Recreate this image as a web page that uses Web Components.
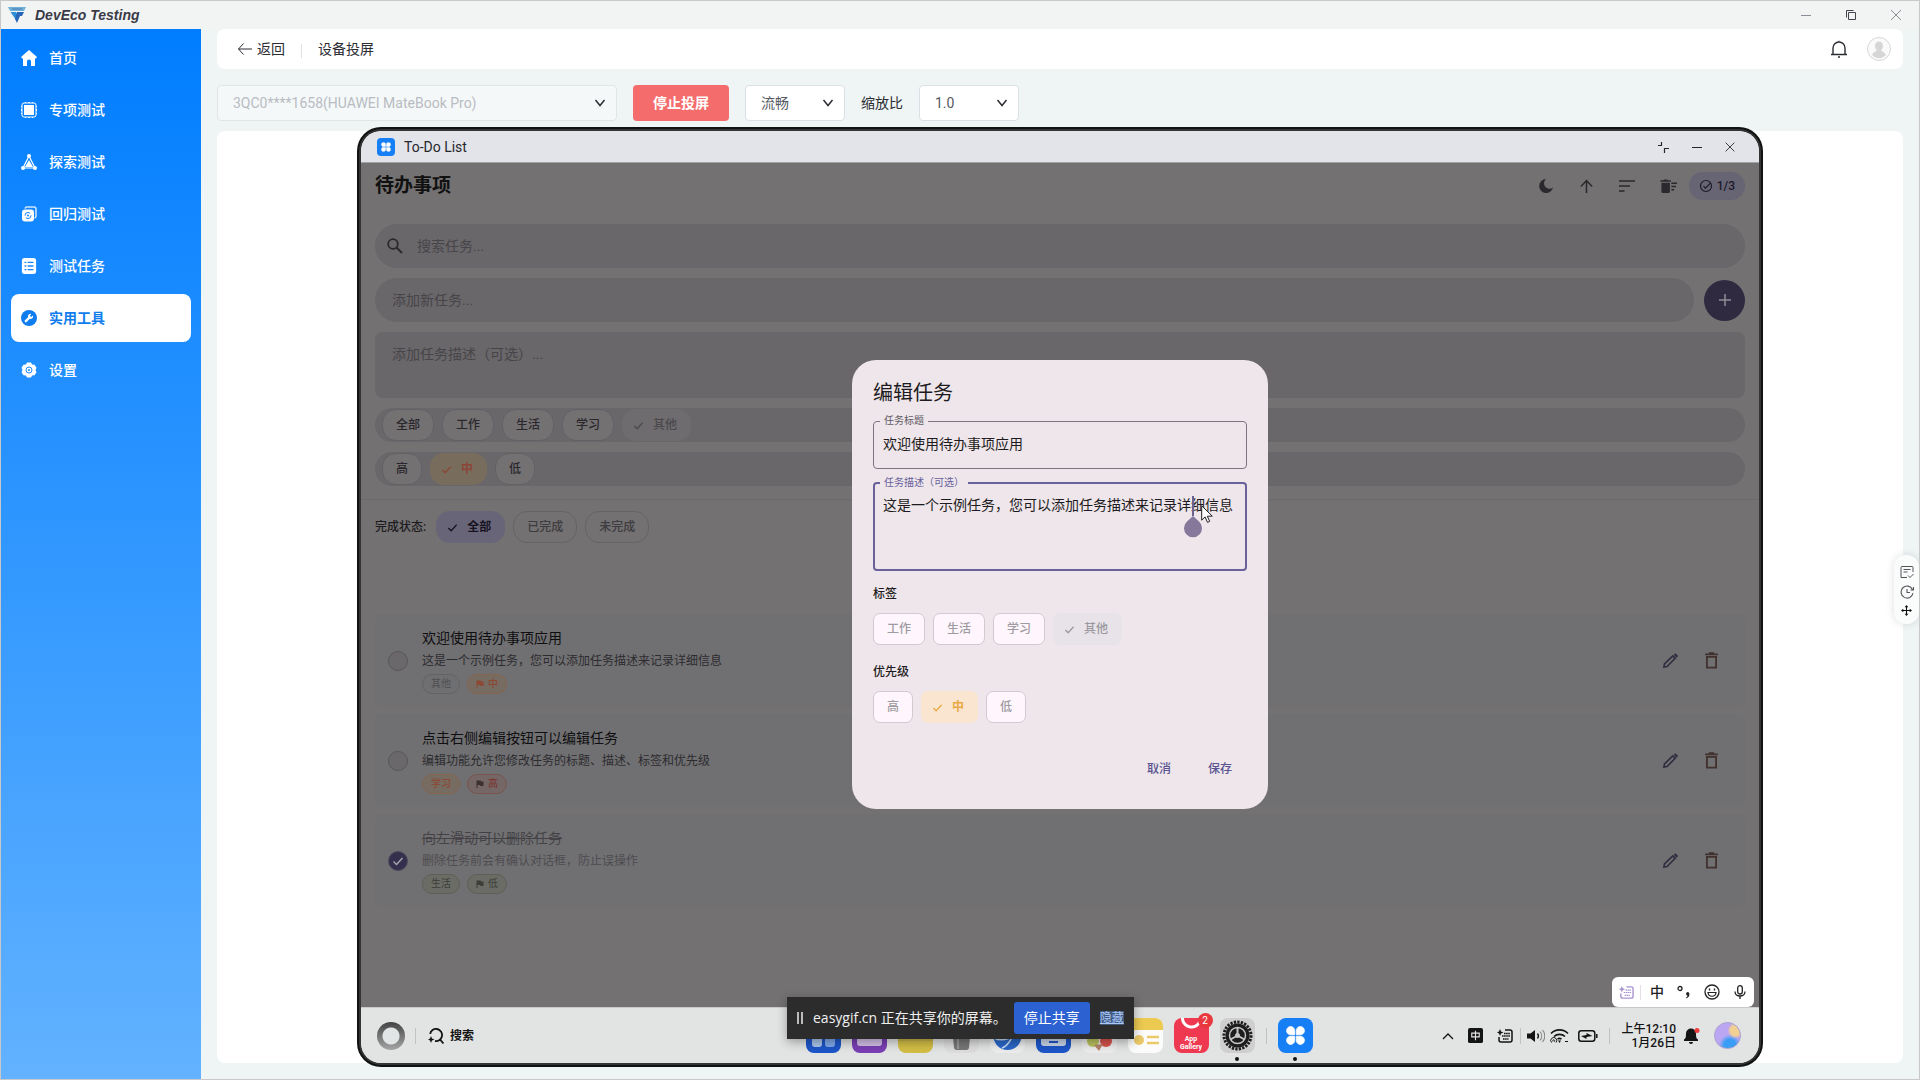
<!DOCTYPE html>
<html lang="zh-CN">
<head>
<meta charset="utf-8">
<title>DevEco Testing</title>
<style>
  * { box-sizing: border-box; }
  body {
    margin: 0;
    height: 100vh;
    font: 14px/20px Roboto, "Noto Sans CJK SC", sans-serif;
    color: #2b2d33;
  }
</style>
</head>
<body>
<dev-window></dev-window>

<script>
// Icons.js
const ICONS = {
  logo: ['0 0 18 16', `<path d="M0 0h18l-2 4H2z" fill="#6fb0d8" stroke="none"/><path d="M2.500 5H8l2 4-2 4z" fill="#2f8fd6" stroke="none"/><path d="M9 5h7l-2 4h-2l-3 7-2-4z" fill="#2766b8" stroke="none"/><path d="M4 2h10" stroke="#4a7fb0"/>`],
  min: ['0 0 16 16', `<path d="M3 8.500h10"/>`],
  restore: ['0 0 16 16', `<path d="M5.500 5.500h7v7h-7zM3.500 10.500v-7h7" />`],
  close: ['0 0 16 16', `<path d="M3 3l10 10M13 3L3 13"/>`],
  collapse: ['0 0 16 16', `<path d="M3 6.500h3.500V3M9.500 14v-4.500H14" stroke-width="1.200"/>`],
  home: ['0 0 16 16', `<path d="M8 0l8 7-1 1.500h-1V16h-4v-4.500a2 2 0 0 0-4 0V16H2V8.500H1L0 7z" class="f"/>`],
  chip: ['0 0 16 16', `<rect x="1" y="1" width="14" height="14" rx="2"/><rect x="3" y="3" width="10" height="10" class="f"/><path d="M4 .5h1M7 .5h2M11 .5h1M4 15.500h1M7 15.500h2M11 15.500h1M.5 4v1M.5 7v2M.5 11v1M15.500 4v1M15.500 7v2M15.500 11v1"/>`],
  explore: ['0 0 16 16', `<path d="M8 2L2 14h12z" stroke-width="1.200"/><path d="M8 6l4 7H4z" class="f"/><circle cx="8" cy="2" r="2" class="f"/><circle cx="2" cy="14" r="2" class="f"/><circle cx="14" cy="14" r="2" class="f"/>`],
  regress: ['0 0 16 16', `<path d="M4 2.500a2 2 0 0 1 2-1.500h7a2 2 0 0 1 2 2v7a2 2 0 0 1-1.500 2" stroke-width="1.500" opacity=".8"/><rect x="1" y="3.500" width="12" height="12" rx="3" class="f"/><circle cx="7" cy="9.500" r="3" stroke="#1483ff" stroke-dasharray="7 2"/><circle cx="7" cy="9.500" r="1" fill="#1483ff" stroke="none"/>`],
  tasks: ['0 0 16 18', `<rect width="16" height="18" rx="3" class="f"/><path d="M3 5h2M6.500 5H13M3 9h2M6.500 9H13M3 13h2M6.500 13H13" stroke="#1686ff" stroke-width="1.500"/>`],
  wrench: ['0 0 16 16', `<circle cx="8" cy="8" r="8" class="f"/><path d="M4.800 11.200L8.500 7.500" stroke="#fff" stroke-width="2.400" stroke-linecap="round"/><path d="M12 5.500a2.600 2.600 0 1 1-1.700-1.600L8.900 5.700l1.300 1.300z" fill="#fff" stroke="none"/>`],
  gear: ['0 0 16 16', `<path d="M6 .5h4l1 2 2.500 .3 2 3-1 2.200 1 2.200-2 3-2.500.3-1 2H6l-1-2-2.500-.3-2-3 1-2.200-1-2.200 2-3L5 2.500z" class="f"/><circle cx="8" cy="8" r="3" stroke="#1f8aff"/><circle cx="8" cy="8" r="1" fill="#1f8aff" stroke="none"/>`],
  back: ['0 0 16 16', `<path d="M15 8H1.500M6.500 2.500L1.500 8l5 5.500"/>`],
  bell: ['0 0 18 18', `<path d="M1 14.500h16M3 14.500V8a6 6 0 0 1 12 0v6.500M8 17h2M8.500 1.500h1" stroke-width="1.400"/>`],
  user: ['0 0 24 24', `<circle cx="12" cy="12" r="11.500" fill="#fafafa" stroke="#d6d6d6"/><path d="M12 4.500a4 4.500 0 0 1 4 4.500c0 2-.8 3.200-1.800 4 .3 1.500 3 1.700 4.800 4.800a9 9 0 0 1-14 0c1.800-3.100 4.500-3.300 4.800-4.800C8.800 12.200 8 11 8 9a4 4.500 0 0 1 4-4.500z" fill="#d6d6d6" stroke="none"/>`],
  chevron: ['0 0 12 12', `<path d="M1.500 3l4.500 5.500L10.500 3" stroke-width="1.500"/>`],
  up: ['0 0 12 12', `<path d="M1 9l5-5 5 5" stroke-width="1.300"/>`],
  clover: ['0 0 18 18', `<rect width="18" height="18" rx="4" fill="#167ff5" stroke="none"/><path d="M8.600 8.600H6.800a2.100 2.100 0 1 1 1.800-1.900zM9.400 8.600h1.800a2.100 2.100 0 1 0-1.800-1.900zM8.600 9.400H6.800a2.100 2.100 0 1 0 1.800 1.900zM9.400 9.400h1.800a2.100 2.100 0 1 1-1.800 1.900z" fill="#fff" stroke="#fff" stroke-width=".4"/>`],
  moon: ['0 0 16 16', `<path d="M8 1a7 7 0 1 0 7 8.500A5 5 0 0 1 8 1z" class="f"/>`],
  arrowUp: ['0 0 16 16', `<path d="M8 15V2M2 8l6-6.300L14 8" stroke-width="1.600"/>`],
  sort: ['0 0 16 16', `<path d="M0 3h16M0 8h11M0 13h5.500" stroke-width="1.700"/>`],
  sweep: ['0 0 18 16', `<path d="M1.500 4h9v9.500a1.500 1.500 0 0 1-1.500 1.500H3a1.500 1.500 0 0 1-1.500-1.500zM.5 1.500h3L4.500.5h3l1 1h3V3H.5z" class="f"/><path d="M12 4.500h6M12 8h5M12 11.500h3" stroke-width="1.600"/>`],
  checkCircle: ['0 0 14 14', `<circle cx="7" cy="7" r="5.500" stroke-width="1.200"/><path d="M4.500 7.200l1.900 1.900 5-5" stroke-width="1.200"/>`],
  search: ['0 0 16 16', `<circle cx="6" cy="6" r="4.800" stroke-width="1.800"/><path d="M9.500 9.500l5.500 5.500" stroke-width="2"/>`],
  plus: ['0 0 14 14', `<path d="M7 1v12M1 7h12" stroke-width="1.500"/>`],
  check: ['0 0 12 12', `<path d="M1.500 6.500l3 3 6-6.500" stroke-width="1.400"/>`],
  flag: ['0 0 8 8', `<path d="M.5.500h4l.5 1h2.500v4.500H4.500L4 5H1.500v3h-1z" class="f"/>`],
  pencil: ['0 0 18 18', `<path d="M2 16l.6-3.300 8.800-8.600 2.600 2.600-8.700 8.700z" stroke-width="1.700"/><path d="M12.500 3l1.600-1.600 3 2.800L15.300 6z" class="f"/>`],
  trash: ['0 0 14 16', `<path d="M1 2.200h12M4.500 1h5" stroke-width="1.600"/><path d="M2.700 4.500h8.600v10.200H2.700z" stroke-width="1.700"/>`],
  aiSearch: ['0 0 16 16', `<path d="M2.200 6A6 6 0 1 1 7 13M12 11.500l3.500 4" stroke-width="1.800"/><path d="M3 8l1 2.500L6.500 11.500 4 12.500 3 15l-1-2.500L0 11.500l2-1z" class="f"/>`],
  zhong: ['0 0 16 16', `<rect width="16" height="16" rx="2" class="f"/><path d="M4 5.500h8v4H4zM8 3v10" stroke="#e4e4e4" stroke-width="1.200"/>`],
  keyboard: ['0 0 16 14', `<path d="M8 1h5a2 2 0 0 1 2 2v8a2 2 0 0 1-2 2H4a2 2 0 0 1-2-2V8" stroke-width="1.500"/><path d="M3 0l1 2.500L6.500 3.500 4 4.500 3 7 2 4.500 0 3.500 2 2.500z" class="f"/><path d="M5 7h8M7 4.500h6M6 10h5.500" stroke-width="1.300" stroke-dasharray="1.600 .5"/>`],
  speaker: ['0 0 18 14', `<path d="M0 4.500h3.500L8 1v12L3.500 9.500H0z" class="f" stroke-linejoin="round"/><path d="M10.500 4.500a4 4 0 0 1 0 5" stroke-width="1.300"/><path d="M13 2.500a7 7 0 0 1 0 9M15.500 1a9 9 0 0 1 0 12" stroke-width="1.100" opacity=".45"/>`],
  wifi: ['0 0 20 16', `<path d="M1 5.500a12 12 0 0 1 17 0M4 8.500a8 8 0 0 1 11 0M7.500 11a4 4 0 0 1 4 0" stroke-width="1.700"/><path d="M8 12.500h3L9.500 15z" class="f"/><path d="M1.500 14.500a3 3 0 1 1 4.500 0M3 13.500a1 1 0 1 1 1.500 0M15 13.500h3" stroke-width="1"/>`],
  battery: ['0 0 20 12', `<rect x=".8" y=".8" width="16" height="10.400" rx="2.500" stroke-width="1.500"/><path d="M18.800 4v4" stroke-width="1.500"/><path d="M3 6l5.500-1V3L14.500 6l-6 1v2z" class="f"/>`],
  bellSolid: ['0 0 16 16', `<path d="M7 .5a5 5 0 0 1 5 5c0 4 .5 5 2 6v1.500H0V11.500c1.500-1 2-2 2-6a5 5 0 0 1 5-5zM5 14h4a2 2 0 0 1-4 0z" class="f"/><circle cx="13" cy="2.500" r="2.500" fill="#ee3b3b" stroke="none"/>`],
  punct: ['0 0 14 14', `<circle cx="3" cy="3.500" r="2" stroke-width="1.300"/><path d="M10.500 7a1.900 1.900 0 0 1 1.900 2c0 2.200-.8 3.500-2.900 4.200l-.4-.9c1-.5 1.400-1 1.400-1.600A1.900 1.900 0 0 1 10.500 7z" class="f"/>`],
  smile: ['0 0 16 16', `<circle cx="8" cy="8" r="7" stroke-width="1.300"/><path d="M4 8.500c.5 5 7.500 5 8 0z" stroke-width="1.200"/><path d="M5.500 4.500v2M10.500 4.500v2" stroke-width="1.400"/>`],
  mic: ['0 0 12 14', `<rect x="3.700" y=".7" width="4.600" height="8.300" rx="2.300" stroke-width="1.300"/><path d="M1 6.500c0 6 10 6 10 0M6 11v3" stroke-width="1.300"/>`],
  note: ['0 0 14 14', `<path d="M13 7V2.500a1 1 0 0 0-1-1H2a1 1 0 0 0-1 1v10h6M3.500 4.500h7M3.500 7h4M8 10.500l2 2 3.500-3.500"/>`],
  history: ['0 0 14 14', `<path d="M12.500 4.500A6 6 0 1 0 13 8M13.500 2v3h-3M7 4v3.500h3" stroke-width="1.100"/>`],
  move: ['0 0 12 12', `<path d="M6 1v10M1 6h10" stroke-width="1.200"/><path d="M6 0l2 2.500H4zM6 12L4 9.500h4zM0 6l2.500-2v4zM12 6L9.500 8V4z" class="f"/>`],
  cursor: ['0 0 12 18', `<path d="M.7.700v14.500l3.400-3.300 2.400 5.500 2.200-1-2.400-5.200h5z" fill="#fff" stroke="#222"/>`],
  drop: ['0 0 20 22', `<path d="M10 0l6 5.500a9 9 0 1 1-12 0z" class="f"/>`],
  // dock artwork
  dockHome: ['0 0 35 35', `<rect width="35" height="35" rx="8" fill="#1d56c8" stroke="none"/><g fill="#a9c4ea" stroke="none"><rect x="6" y="6" width="10" height="10" rx="3"/><rect x="19" y="6" width="10" height="10" rx="3"/><rect x="6" y="18" width="10" height="11" rx="3"/><rect x="19" y="18" width="10" height="11" rx="3" fill="#7fa8e8"/></g>`],
  dockPurple: ['0 0 35 35', `<rect width="35" height="35" rx="8" fill="#7a3fb4" stroke="none"/><rect x="5" y="6" width="25" height="22" rx="3" fill="#d3bfe6" stroke="none"/>`],
  dockFiles: ['0 0 35 35', `<rect width="35" height="35" rx="8" fill="#d2bd45" stroke="none"/><path d="M0 22h35" stroke="#b9a848"/>`],
  dockBin: ['0 0 35 35', `<rect width="35" height="35" rx="8" fill="#dcdcdc" stroke="none"/><path d="M8 8h19l-2 22a3 3 0 0 1-2 2H12a3 3 0 0 1-2-2z" fill="#777" stroke="none"/><path d="M14 10v21" stroke="#999" stroke-width="2"/>`],
  dockWeb: ['0 0 35 35', `<rect width="35" height="35" rx="8" fill="#ececec" stroke="none"/><circle cx="17.500" cy="18" r="14" fill="#2a67c8" stroke="none"/><path d="M4 20c8 4 20 1 26-8M12 30c6-2 12-12 13-20" stroke="#c6dcf5" stroke-width="1.500"/>`],
  dockMail: ['0 0 35 35', `<rect width="35" height="35" rx="8" fill="#1d56c8" stroke="none"/><rect x="5" y="7" width="25" height="21" rx="3" fill="#c9d6ea" stroke="none"/><path d="M13 24h9" stroke="#1d56c8" stroke-width="2"/>`],
  dockPhoto: ['0 0 35 35', `<rect width="35" height="35" rx="8" fill="#ebebeb" stroke="none"/><g stroke="none"><circle cx="11" cy="23" r="6" fill="#b9c25e"/><circle cx="24" cy="23" r="6" fill="#d8524c"/><circle cx="18" cy="14" r="7" fill="#e8a23c"/><path d="M12 27l5 6 4-7z" fill="#b5846a"/></g>`],
  dockCard: ['0 0 35 35', `<rect width="35" height="35" rx="8" fill="#fbfbfb" stroke="none"/><path d="M0 12V8a8 8 0 0 1 8-8h19a8 8 0 0 1 8 8v4z" fill="#ecca52" stroke="none"/><circle cx="11" cy="22" r="5" fill="#ecca6a" stroke="none"/><path d="M19 19h12M19 25h12" stroke="#ecca6a" stroke-width="2.500"/>`],
  dockGear: ['0 0 35 35', `<rect width="35" height="35" rx="8" fill="#cfcfcf" stroke="none"/><circle cx="17.500" cy="17.500" r="13.500" stroke="#1d1d1d" stroke-width="3" stroke-dasharray="2.300 1.200"/><circle cx="17.500" cy="17.500" r="12" fill="#1d1d1d" stroke="none"/><circle cx="17.500" cy="17.500" r="8" stroke="#c6c6c6" stroke-width="1.500"/><path d="M17.500 17.500V10M17.500 17.500l-7 4M17.500 17.500l7 4" stroke="#c6c6c6" stroke-width="2"/><circle cx="17.500" cy="17.500" r="2.500" fill="#c6c6c6" stroke="none"/>`]
};

class UiIcon extends HTMLElement {
  connectedCallback() {
    if (this.shadowRoot) return;
    const [box, body] = ICONS[this.getAttribute('name')];
    const size = this.getAttribute('size') || 16;
    this.attachShadow({ mode: 'open' }).innerHTML = `
      <style>
        :host { display: inline-flex; flex: none; justify-content: center; align-items: center; }
        svg { display: block; fill: none; stroke: currentColor; }
        .f { fill: currentColor; stroke: none; }
      </style>
      <svg width="${size}" height="${size}" viewBox="${box}" aria-hidden="true">${body}</svg>`;
  }
}
customElements.define('ui-icon', UiIcon);

// small helper: every element below is a static template plus its own styles
function define(name, html, setup) {
  const template = document.createElement('template');
  template.innerHTML = `<style>*, :host { box-sizing: border-box; } button, input, select, textarea { font: inherit; color: inherit; margin: 0; }</style>` + html;
  customElements.define(name, class extends HTMLElement {
    connectedCallback() {
      if (this.shadowRoot) return;
      this.attachShadow({ mode: 'open' }).appendChild(template.content.cloneNode(true));
      if (setup) setup(this, this.shadowRoot);
    }
  });
}

// Sidebar
define('nav-item', `
  <style>
    :host { display: block; }
    a {
      display: flex; align-items: center; gap: 12px;
      height: 48px; padding: 0 10px;
      border-radius: 8px; color: #fff; text-decoration: none; font-weight: 500;
    }
    :host([active]) a { background: #fff; color: #0f7dee; font-weight: 700; }
  </style>
  <a href="#"><slot></slot></a>
`, (el, root) => {
  root.querySelector('a').insertAdjacentHTML('afterbegin', `<ui-icon name="${el.getAttribute('icon')}"></ui-icon>`);
});

define('side-nav', `
  <style>
    :host { display: block; width: 200px; padding: 5px 10px; background: linear-gradient(#007dff, #62b2ff); }
    nav { display: flex; flex-direction: column; gap: 4px; }
  </style>
  <nav>
    <nav-item icon="home">首页</nav-item>
    <nav-item icon="chip">专项测试</nav-item>
    <nav-item icon="explore">探索测试</nav-item>
    <nav-item icon="regress">回归测试</nav-item>
    <nav-item icon="tasks">测试任务</nav-item>
    <nav-item icon="wrench" active>实用工具</nav-item>
    <nav-item icon="gear">设置</nav-item>
  </nav>
`);

// Window title bar
define('title-bar', `
  <style>
    :host { display: flex; align-items: center; height: 28px; padding: 0 15px 0 7px; background: #f2f4f4; color: #3a3a48; }
    h1 { margin: 0 auto 0 9px; font: italic bold 14px/20px "Liberation Sans", sans-serif; }
    button { display: flex; padding: 0; border: 0; background: none; color: #8d8d97; }
    .btns { display: flex; gap: 29px; }
    .r { color: #44444c; }
  </style>
  <ui-icon name="logo" size="18"></ui-icon>
  <h1>DevEco Testing</h1>
  <div class="btns">
    <button aria-label="最小化"><ui-icon name="min"></ui-icon></button>
    <button class="r" aria-label="还原"><ui-icon name="restore"></ui-icon></button>
    <button aria-label="关闭"><ui-icon name="close"></ui-icon></button>
  </div>
`);

define('page-header', `
  <style>
    :host { display: flex; align-items: center; height: 40px; padding: 0 12px 0 20px; border-radius: 8px; background: #fff; }
    a { display: flex; align-items: center; gap: 4px; color: inherit; text-decoration: none; }
    .sep { width: 1px; height: 14px; margin: 4px 16px 0; background: #dfe1e4; }
    h2 { margin: 0 auto 0 0; font: inherit; }
    button { display: flex; padding: 0; border: 0; background: none; margin-left: 19px; }
  </style>
  <a href="#"><ui-icon name="back"></ui-icon>返回</a>
  <span class="sep"></span>
  <h2>设备投屏</h2>
  <button aria-label="通知"><ui-icon name="bell" size="18"></ui-icon></button>
  <button aria-label="账户"><ui-icon name="user" size="24"></ui-icon></button>
`);

// Select with our own arrow
define('drop-down', `
  <style>
    :host { display: grid; grid-template-columns: 1fr 34px; align-items: center; width: 100px; }
    select {
      grid-area: 1 / 1 / 2 / 3; width: 100%; height: 36px; padding: 0 15px;
      appearance: none; border: 1px solid #dcdfe6; border-radius: 4px; background: #fff;
      color: #55585e; opacity: 1;
    }
    select:disabled { background: #f4f8f9; color: #b9bcc2; border-color: #e1e5e8; }
    ui-icon { grid-area: 1 / 2; color: #2b2d33; pointer-events: none; }
  </style>
  <select></select>
  <ui-icon name="chevron" size="12"></ui-icon>
`, (el, root) => {
  const select = root.querySelector('select');
  select.add(new Option(el.getAttribute('value')));
  select.disabled = el.hasAttribute('disabled');
  select.setAttribute('aria-label', el.getAttribute('label'));
});

define('cast-toolbar', `
  <style>
    :host { display: flex; align-items: center; gap: 16px; }
    .device { width: 400px; }
    button { width: 96px; height: 36px; border: 0; border-radius: 4px; background: #f56c6c; color: #fff; font-weight: 700; }
  </style>
  <drop-down class="device" value="3QC0****1658(HUAWEI MateBook Pro)" label="设备" disabled></drop-down>
  <button>停止投屏</button>
  <drop-down value="流畅" label="画质"></drop-down>
  <span>缩放比</span>
  <drop-down value="1.0" label="缩放比"></drop-down>
`);

// To-do app pieces
define('todo-chip', `
  <style>
    :host { display: block; }
    button {
      display: flex; align-items: center; gap: 9px; height: 32px; padding: 0 13px;
      border: 1px solid var(--chip-line, #636165); border-radius: var(--chip-radius, 14px);
      background: var(--chip-bg, #747173); color: var(--chip-ink, #29272b);
      font-size: 12px; line-height: 18px; font-weight: 500; white-space: nowrap;
    }
    ui-icon { display: none; }
    :host([on]) button { padding-left: 10px; border-color: transparent; background: var(--on-bg); color: var(--on-ink); }
    :host([on]) ui-icon { display: flex; }
    :host([tone="grey"]) { --on-bg: #6e6c6f; --on-ink: #4b494c; }
    :host([tone="orange"]) { --on-bg: #786c5d; --on-ink: #8c4637; }
    :host([tone="violet"]) { --on-bg: #696579; --on-ink: #16141f; }
    :host([tone="grey-light"]) { --on-bg: #e8e3e9; --on-ink: #9b999e; }
    :host([tone="orange-light"]) { --on-bg: #fae6d0; --on-ink: #e9aa45; }
    :host([tone="violet"]) button, :host([tone^="orange"]) button { font-weight: 700; }
  </style>
  <button type="button"><ui-icon name="check" size="11"></ui-icon><slot></slot></button>
`, (el, root) => root.querySelector('button').setAttribute('aria-pressed', el.hasAttribute('on')));

define('task-tag', `
  <style>
    :host {
      display: flex; align-items: center; gap: 4px; height: 20px; padding: 0 8px;
      border: 1px solid #636264; border-radius: 10px; background: #6f6f71; color: #504f51;
      font-size: 10px; line-height: 14px;
    }
    :host([tone="orange"]) { border-color: #86654f; background: #766c62; color: #8c4833; font-weight: 500; }
    :host([tone="red"]) { border-color: #7a5450; background: #746765; color: #7e3029; }
    :host([tone="green"]) { border-color: #5d6057; background: #6b6c66; color: #3c3e38; }
    ui-icon { display: none; }
    :host([flag]) ui-icon { display: flex; }
    :host([flag][tone="red"]) ui-icon { color: #3a3032; }
  </style>
  <ui-icon name="flag" size="8"></ui-icon><slot></slot>
`);

define('todo-task', `
  <style>
    :host {
      display: flex; align-items: center; height: 93px; padding: 0 25px 0 13px;
      border-radius: 8px; background: #707072; color: #1d1b20;
    }
    input {
      appearance: none; width: 20px; height: 20px; margin: 0; border: 1px solid #58565a;
      border-radius: 50%; background: #6b686c; grid-area: 1 / 1;
    }
    .tick { display: grid; place-items: center; margin-right: 14px; }
    .tick ui-icon { display: none; grid-area: 1 / 1; color: #aaa7b0; pointer-events: none; }
    .text { flex: 1; display: flex; flex-direction: column; gap: 2px; }
    h3 { margin: 0; font: 14px/22px Roboto, "Noto Sans CJK SC", sans-serif; color: #0f0e10; }
    p { margin: 0; font-size: 12px; line-height: 20px; color: #2d2b2f; }
    .tags { display: flex; gap: 7px; margin-top: 1px; }
    button { display: flex; padding: 0; border: 0; background: none; color: #2f2c3f; }
    .del { margin-left: 24px; color: #40302e; }
    :host([done]) input { background: #332f4d; border-color: #4d4a5c; }
    :host([done]) .tick ui-icon { display: flex; }
    :host([done]) h3 { color: #444246; text-decoration: line-through; }
    :host([done]) p { color: #4e4c50; }
  </style>
  <label class="tick"><input type="checkbox" aria-label="完成"><ui-icon name="check" size="12"></ui-icon></label>
  <div class="text">
    <h3><slot name="title"></slot></h3>
    <p><slot></slot></p>
    <div class="tags"><slot name="tags"></slot></div>
  </div>
  <button aria-label="编辑"><ui-icon name="pencil" size="17"></ui-icon></button>
  <button class="del" aria-label="删除"><ui-icon name="trash" size="17"></ui-icon></button>
`, (el, root) => { root.querySelector('input').checked = el.hasAttribute('done'); });

define('todo-app', `
  <style>
    :host { display: flex; flex-direction: column; background: #737172; color: #1d1b20; }
    .form { display: flex; flex-direction: column; gap: 10px; padding: 0 14px 13px; border-bottom: 1px solid #6c6a6c; }
    header { display: flex; align-items: center; height: 46px; margin-bottom: 5px; }
    h2 { margin: 0 auto 0 0; font-size: 19px; line-height: 26px; font-weight: 700; color: #111; }
    .act { display: flex; margin-right: 25px; padding: 0; border: 0; background: none; color: #2b292d; }
    .act.last { margin-right: 12px; }
    .count { display: flex; align-items: center; gap: 4px; height: 28px; padding: 0 10px; border-radius: 14px; background: #676474; font-size: 12px; font-weight: 500; color: #1c1a29; }
    .field { display: flex; align-items: center; height: 44px; border-radius: 22px; background: #69676a; }
    .field ui-icon { margin: 0 -3px 0 12px; color: #2b292d; }
    input { flex: 1; min-width: 0; height: 100%; padding: 0 17px; border: 0; background: none; }
    ::placeholder { color: #474548; opacity: 1; }
    .row { display: flex; align-items: center; gap: 10px; }
    .row .field { flex: 1; }
    .add { display: grid; place-items: center; width: 41px; height: 41px; padding: 0; border: 0; border-radius: 50%; background: #2f2a40; color: #908d96; }
    textarea { display: block; width: 100%; height: 66px; padding: 12px 17px; border: 0; border-radius: 8px; background: #69676a; resize: none; }
    .chips { display: flex; align-items: center; gap: 8px; height: 34px; padding: 0 7px; border-radius: 17px; background: #69676a; }
    .status { display: flex; align-items: center; gap: 8px; padding: 11px 14px 0; font-size: 12px; font-weight: 500; }
    .status span { margin-right: 2px; }
    .list { display: flex; flex-direction: column; gap: 7px; padding: 71px 14px 0; }
    .status todo-chip { --chip-ink: #3e3c40; --chip-line: #656366; --chip-bg: #737172; }
  </style>
  <section class="form">
    <header>
      <h2>待办事项</h2>
      <button class="act" aria-label="深色模式"><ui-icon name="moon"></ui-icon></button>
      <button class="act" aria-label="升序"><ui-icon name="arrowUp" size="15"></ui-icon></button>
      <button class="act" aria-label="排序"><ui-icon name="sort"></ui-icon></button>
      <button class="act last" aria-label="清除已完成"><ui-icon name="sweep" size="17"></ui-icon></button>
      <span class="count"><ui-icon name="checkCircle" size="14"></ui-icon>1/3</span>
    </header>
    <div class="field"><ui-icon name="search"></ui-icon><input type="search" placeholder="搜索任务..." aria-label="搜索任务"></div>
    <div class="row">
      <div class="field"><input type="text" placeholder="添加新任务..." aria-label="添加新任务"></div>
      <button class="add" aria-label="添加"><ui-icon name="plus" size="14"></ui-icon></button>
    </div>
    <textarea placeholder="添加任务描述（可选）..." aria-label="添加任务描述"></textarea>
    <div class="chips">
      <todo-chip>全部</todo-chip><todo-chip>工作</todo-chip><todo-chip>生活</todo-chip><todo-chip>学习</todo-chip>
      <todo-chip on tone="grey">其他</todo-chip>
    </div>
    <div class="chips">
      <todo-chip>高</todo-chip><todo-chip on tone="orange">中</todo-chip><todo-chip>低</todo-chip>
    </div>
  </section>
  <div class="status">
    <span>完成状态:</span>
    <todo-chip on tone="violet">全部</todo-chip><todo-chip>已完成</todo-chip><todo-chip>未完成</todo-chip>
  </div>
  <div class="list">
    <todo-task>
      <span slot="title">欢迎使用待办事项应用</span>这是一个示例任务，您可以添加任务描述来记录详细信息
      <task-tag slot="tags">其他</task-tag><task-tag slot="tags" tone="orange" flag>中</task-tag>
    </todo-task>
    <todo-task>
      <span slot="title">点击右侧编辑按钮可以编辑任务</span>编辑功能允许您修改任务的标题、描述、标签和优先级
      <task-tag slot="tags" tone="orange">学习</task-tag><task-tag slot="tags" tone="red" flag>高</task-tag>
    </todo-task>
    <todo-task done>
      <span slot="title">向左滑动可以删除任务</span>删除任务前会有确认对话框，防止误操作
      <task-tag slot="tags" tone="green">生活</task-tag><task-tag slot="tags" tone="green" flag>低</task-tag>
    </todo-task>
  </div>
`);

// Outlined field: the fieldset draws the notch round the label
define('outlined-field', `
  <style>
    :host { display: block; }
    fieldset { min-width: 0; margin: 0; padding: 0; border: 1px solid #7a757f; border-radius: 4px; }
    legend { margin-left: 6px; padding: 0 4px; font-size: 10px; line-height: 14px; color: #5f5b64; }
    legend label { display: block; }
    input, textarea { display: block; width: 100%; padding: 0 9px; border: 0; outline: 0; background: none; color: #1d1b20; resize: none; overflow: hidden; }
    input { height: 30px; margin-bottom: 10px; }
    textarea { height: 79px; padding-top: 5px; }
    :host([focused]) fieldset { border: 2px solid #68619a; }
    :host([focused]) legend { margin-left: 5px; color: #68619a; }
    :host([focused]) textarea { padding-left: 8px; padding-right: 0; }
  </style>
  <fieldset><legend><label for="f"></label></legend></fieldset>
`, (el, root) => {
  const control = document.createElement(el.hasAttribute('multiline') ? 'textarea' : 'input');
  control.id = 'f';
  control.spellcheck = false;
  control.value = el.getAttribute('value');
  root.querySelector('label').textContent = el.getAttribute('label');
  root.querySelector('fieldset').appendChild(control);
});

define('edit-dialog', `
  <style>
    :host {
      display: flex; flex-direction: column; width: 416px; padding: 20px 21px;
      border-radius: 24px; background: #eee6eb; color: #1d1b20;
      --chip-radius: 7px; --chip-bg: #fef6fc; --chip-line: #d0cad2; --chip-ink: #9d9aa0;
    }
    h2 { margin: 0; font: 20px/26px Roboto, "Noto Sans CJK SC", sans-serif; }
    .title { margin-top: 8px; }
    .desc { position: relative; margin-top: 7px; }
    /* text handle and pointer sit on top of the text */
    .caret { position: absolute; left: 319px; top: 20px; width: 2px; height: 20px; background: #6b628f; }
    .drop { position: absolute; left: 309px; top: 40px; color: #86789b; }
    .mouse { position: absolute; left: 325px; top: 29px; }
    h3 { margin: 14px 0 10px; font-size: 12px; line-height: 18px; font-weight: 500; }
    h3.p { margin-top: 18px; }
    .chips { display: flex; gap: 8px; }
    .prio { margin-bottom: 28px; }
    .actions { display: flex; justify-content: flex-end; gap: 13px; padding: 0 3px 2px; }
    .actions button { padding: 9px 12px; border: 0; background: none; color: #5b5590; font-size: 12px; line-height: 18px; font-weight: 500; }
  </style>
  <h2>编辑任务</h2>
  <outlined-field class="title" label="任务标题" value="欢迎使用待办事项应用"></outlined-field>
  <div class="desc">
    <outlined-field multiline focused label="任务描述（可选）" value="这是一个示例任务，您可以添加任务描述来记录详细信息"></outlined-field>
    <span class="caret"></span>
    <ui-icon class="drop" name="drop" size="22"></ui-icon>
    <ui-icon class="mouse" name="cursor" size="18"></ui-icon>
  </div>
  <h3>标签</h3>
  <div class="chips">
    <todo-chip>工作</todo-chip><todo-chip>生活</todo-chip><todo-chip>学习</todo-chip>
    <todo-chip on tone="grey-light">其他</todo-chip>
  </div>
  <h3 class="p">优先级</h3>
  <div class="chips prio">
    <todo-chip>高</todo-chip><todo-chip on tone="orange-light">中</todo-chip><todo-chip>低</todo-chip>
  </div>
  <div class="actions"><button>取消</button><button>保存</button></div>
`);

// Taskbar
define('dock-item', `
  <style>
    :host { position: relative; display: block; height: 35px; }
    button { display: block; padding: 0; border: 0; background: none; }
    :host([running])::after {
      content: ""; position: absolute; left: 50%; bottom: -8px; width: 4px; height: 4px;
      margin-left: -2px; border-radius: 50%; background: #111;
    }
    .store {
      width: 35px; height: 35px; padding-top: 17px; border-radius: 8px; background: #ef3950 radial-gradient(circle at 50% 0, #ef3950 7px, #fff 8px, #fff 10px, #ef3950 11px);
      color: #fff; font-size: 7px; line-height: 8px; font-weight: 700; text-align: center;
    }
    .badge {
      position: absolute; right: -4px; top: -5px; width: 15px; height: 15px; border-radius: 50%;
      background: #e8383d; color: #fff; font-size: 10px; line-height: 15px; text-align: center;
    }
  </style>
  <button></button>
`, (el, root) => {
  const button = root.querySelector('button');
  const name = el.getAttribute('icon');
  button.setAttribute('aria-label', el.getAttribute('label'));
  if (name === 'store') {
    button.innerHTML = '<div class="store">App<br>Gallery</div>';
    root.append(Object.assign(document.createElement('span'), { className: 'badge', textContent: '2' }));
  } else {
    button.innerHTML = `<ui-icon name="${name}" size="35"></ui-icon>`;
  }
});

define('task-bar', `
  <style>
    :host {
      display: grid; grid-template-columns: 1fr auto 1fr; align-items: center;
      height: 56px; padding: 0 18px 0 16px; background: #e2e3e3; color: #141414; border-top: 1px solid #c9c9c9;
    }
    .left, .dock, .tray { display: flex; align-items: center; }
    .ring { width: 28px; height: 28px; padding: 0; border: 0; border-radius: 50%; background: radial-gradient(circle, #e2e5e6 8px, transparent 9px), linear-gradient(#444, #a5a5a5); }
    .sep { width: 1px; height: 16px; background: #c2c2c4; }
    .left .sep { margin: 0 12px 0 10px; }
    .search { display: flex; align-items: center; gap: 6px; padding: 0; border: 0; background: none; font-size: 12px; font-weight: 700; }
    .dock { gap: 11px; }
    .tray { justify-content: flex-end; }
    .tray ui-icon { margin-right: 14px; }
    .tray .kb { margin-right: 7px; }
    .tray .sp { margin: 0 5px 0 6px; }
    .tray .wf { margin-right: 8px; }
    .tray .bt { margin-right: 11px; }
    time { margin: 0 8px 0 12px; font-size: 12px; line-height: 14px; font-weight: 500; text-align: right; }
    .orb {
      width: 27px; height: 27px; border: 1px solid #aaa2cf; border-radius: 50%;
      background: radial-gradient(circle at 82% 30%, #f2cf92 5px, transparent 8px), radial-gradient(circle at 60% 90%, #3a9df5 6px, transparent 11px), #bba6f3;
    }
  </style>
  <div class="left">
    <button class="ring" aria-label="启动台"></button>
    <span class="sep"></span>
    <button class="search"><ui-icon name="aiSearch"></ui-icon>搜索</button>
  </div>
  <div class="dock">
    <dock-item icon="dockHome" label="桌面"></dock-item>
    <dock-item icon="dockPurple" label="多任务"></dock-item>
    <dock-item icon="dockFiles" label="文件"></dock-item>
    <dock-item icon="dockBin" label="回收站"></dock-item>
    <dock-item icon="dockWeb" label="浏览器"></dock-item>
    <dock-item icon="dockMail" label="邮件"></dock-item>
    <dock-item icon="dockPhoto" label="图库"></dock-item>
    <dock-item icon="dockCard" label="备忘录"></dock-item>
    <dock-item icon="store" label="应用市场"></dock-item>
    <dock-item icon="dockGear" label="设置" running></dock-item>
    <span class="sep"></span>
    <dock-item icon="clover" label="To-Do List" running></dock-item>
  </div>
  <div class="tray">
    <ui-icon name="up" size="12"></ui-icon>
    <ui-icon name="zhong" size="15"></ui-icon>
    <ui-icon class="kb" name="keyboard" size="16"></ui-icon>
    <span class="sep"></span>
    <ui-icon class="sp" name="speaker" size="18"></ui-icon>
    <ui-icon class="wf" name="wifi" size="20"></ui-icon>
    <ui-icon class="bt" name="battery" size="20"></ui-icon>
    <span class="sep"></span>
    <time>上午12:10<br>1月26日</time>
    <ui-icon name="bellSolid" size="16"></ui-icon>
    <span class="orb"></span>
  </div>
`);

define('ime-bar', `
  <style>
    :host { display: flex; align-items: center; gap: 13px; width: 142px; height: 30px; padding: 0 7px; border-radius: 6px; background: #fff; color: #222; }
    .kb { display: flex; padding-right: 6px; margin-right: -4px; border-right: 1px solid #e6dfe8; color: #a893cf; }
    b { font-weight: 500; line-height: 20px; }
  </style>
  <span class="kb"><ui-icon name="keyboard" size="15"></ui-icon></span>
  <b>中</b>
  <ui-icon name="punct" size="14"></ui-icon>
  <ui-icon name="smile" size="16"></ui-icon>
  <ui-icon name="mic" size="14"></ui-icon>
`);

define('share-banner', `
  <style>
    :host {
      display: flex; align-items: center; height: 42px; padding: 0 10px; background: #2c2c2d; color: #f0f0f0;
      font-family: "Open Sans", "Noto Sans CJK SC", sans-serif; white-space: nowrap; box-shadow: 0 3px 10px #0005;
    }
    .grip { width: 6px; height: 12px; margin-right: 10px; border: solid #bbb; border-width: 0 2px; }
    button { width: 76px; height: 32px; margin: 0 10px 0 7px; padding: 0; border: 0; border-radius: 3px; background: #2b61d1; color: #fff; }
    a { font-size: 12px; line-height: 14px; color: #a8c7fa; background: #41597c; }
  </style>
  <span class="grip"></span>
  <span>easygif.cn 正在共享你的屏幕。</span>
  <button>停止共享</button>
  <a href="#">隐藏</a>
`);

define('device-screen', `
  <style>
    :host {
      position: relative; display: flex; flex-direction: column; height: 100%; aspect-ratio: 3 / 2;
      border-radius: 20px; box-shadow: 0 0 0 2px #333534, 0 0 0 4px #111312;
    }
    .bar { display: flex; align-items: center; height: 32px; padding: 0 22px 0 16px; border-radius: 20px 20px 0 0; background: #e3e4e9; color: #26272b; border-bottom: 1px solid #a0a1a2; }
    .bar h2 { margin: 0 auto 0 9px; font: inherit; line-height: 20px; }
    .bar button { display: flex; padding: 0; border: 0; background: none; margin-left: 18px; }
    todo-app { flex: 1; min-height: 0; }
    task-bar { border-radius: 0 0 20px 20px; }
    edit-dialog { position: absolute; left: 50%; top: 229px; transform: translateX(-50%); }
    ime-bar { position: absolute; right: 5px; bottom: 56px; }
    share-banner { position: absolute; left: 426px; bottom: 24px; }
  </style>
  <div class="bar">
    <ui-icon name="clover" size="18"></ui-icon>
    <h2>To-Do List</h2>
    <button aria-label="缩小"><ui-icon name="collapse"></ui-icon></button>
    <button aria-label="最小化"><ui-icon name="min"></ui-icon></button>
    <button aria-label="关闭"><ui-icon name="close" size="14"></ui-icon></button>
  </div>
  <todo-app></todo-app>
  <task-bar></task-bar>
  <edit-dialog></edit-dialog>
  <ime-bar></ime-bar>
  <share-banner></share-banner>
`);

define('side-widget', `
  <style>
    :host {
      display: flex; flex-direction: column; align-items: center; gap: 6px; width: 25px; padding: 10px 0 8px;
      border-radius: 12px; background: #fafcfc; box-shadow: 0 0 8px #0002; color: #55555a;
    }
    .mv { color: #111; }
  </style>
  <ui-icon name="note" size="14"></ui-icon>
  <ui-icon name="history" size="14"></ui-icon>
  <ui-icon class="mv" name="move" size="11"></ui-icon>
`);

define('dev-window', `
  <style>
    :host { position: relative; display: flex; flex-direction: column; height: 100%; border: 1px solid #c8c8c8; background: #eff5f5; overflow: hidden; }
    .body { flex: 1; display: flex; min-height: 0; }
    main { flex: 1; display: flex; flex-direction: column; min-width: 0; padding: 0 16px; }
    cast-toolbar { margin: 16px 0 10px; }
    .panel { flex: 1; display: flex; justify-content: center; min-height: 0; margin-bottom: 16px; border-radius: 8px; background: #fff; }
    side-widget { position: absolute; right: 0; top: 554px; }
  </style>
  <title-bar></title-bar>
  <div class="body">
    <side-nav></side-nav>
    <main>
      <page-header></page-header>
      <cast-toolbar></cast-toolbar>
      <div class="panel"><device-screen></device-screen></div>
    </main>
  </div>
  <side-widget></side-widget>
`);
</script>
</body>
</html>
